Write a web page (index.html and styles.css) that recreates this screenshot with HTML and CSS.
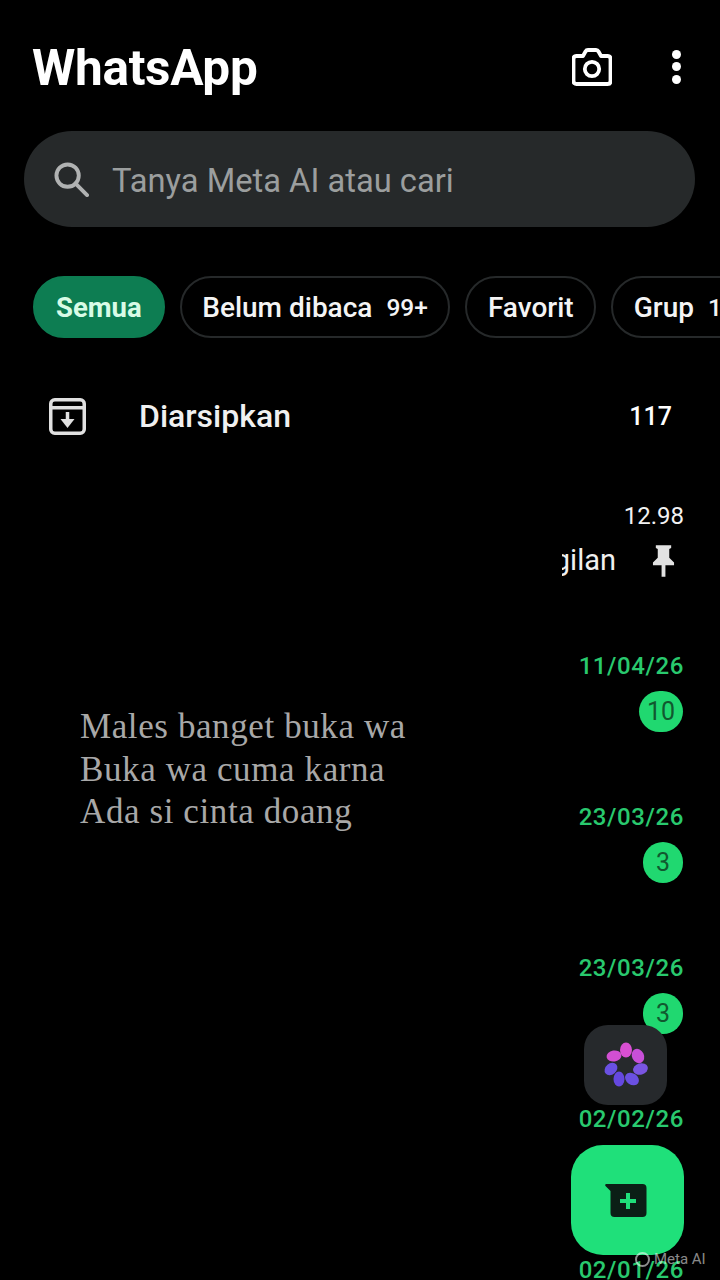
FILE: index.html
```html
<!DOCTYPE html>
<html lang="id">
<head>
  <meta charset="UTF-8" />
  <meta name="viewport" content="width=device-width, initial-scale=1.0" />
  <title>WhatsApp</title>
  <link rel="stylesheet" href="styles.css">
</head>
<body>
  <div class="app">
    <header class="top-bar">
      <h1>WhatsApp</h1>
      <div class="top-actions">
        <svg class="icon-camera" viewBox="0 0 40 38" fill="none" stroke="#fff" stroke-width="3.800">
          <path d="M4.500 8h6.500l2.500-4.500q.8-1.500 2.500-1.500h8q1.700 0 2.500 1.500l2.500 4.500h6.500q3 0 3 3v22q0 3-3 3h-31q-3 0-3-3v-22q0-3 3-3z" stroke-linejoin="round" />
          <circle cx="20" cy="21" r="7.200" />
        </svg>
        <div class="dots"><span></span><span></span><span></span></div>
      </div>
    </header>

    <div class="search">
      <svg class="icon-search" viewBox="0 0 36 36" fill="none" stroke="#b0b2b2" stroke-width="4">
        <circle cx="14" cy="14" r="11.500" />
        <path d="M22 22l12 12" stroke-linecap="round" />
      </svg>
      <span>Tanya Meta AI atau cari</span>
    </div>

    <div class="chips">
      <div class="chip active">Semua</div>
      <div class="chip">Belum dibaca <small>99+</small></div>
      <div class="chip">Favorit</div>
      <div class="chip">Grup <small>12</small></div>
    </div>

    <div class="archived">
      <svg class="icon-archive" viewBox="0 0 37 37" fill="none" stroke="#e0e0e0" stroke-width="3.500">
        <rect x="1.750" y="1.750" width="33.500" height="33.500" rx="4" />
        <path d="M2 9.700h33" />
        <path d="M18.500 14v10" />
        <path d="M11.500 21h14l-7 9z" fill="#e0e0e0" stroke="none" />
      </svg>
      <span class="archived-label">Diarsipkan</span>
      <span class="archived-count">117</span>
    </div>

    <div class="chat">
      <div class="chat-body"></div>
      <div class="chat-meta">
        <div class="chat-time white">12.98</div>
        <div class="pinned">
          <div class="preview"><span>Panggilan</span></div>
          <svg class="icon-pin" viewBox="0 0 24 34" fill="#e2e2e2">
            <path d="M4 1h16v3l-2 1v9l5 5v3h-9v12h-4v-12h-9v-3l5-5v-9l-2-1z" />
          </svg>
        </div>
      </div>
    </div>

    <div class="chat">
      <div class="chat-body">
        <p class="quote">Males banget buka wa<br>Buka wa cuma karna<br>Ada si cinta doang</p>
      </div>
      <div class="chat-meta">
        <div class="chat-time">11/04/26</div>
        <div class="badge wide">10</div>
      </div>
    </div>

    <div class="chat">
      <div class="chat-body"></div>
      <div class="chat-meta">
        <div class="chat-time">23/03/26</div>
        <div class="badge">3</div>
      </div>
    </div>

    <div class="chat">
      <div class="chat-body"></div>
      <div class="chat-meta">
        <div class="chat-time">23/03/26</div>
        <div class="badge">3</div>
      </div>
    </div>

    <div class="chat">
      <div class="chat-body"></div>
      <div class="chat-meta">
        <div class="chat-time">02/02/26</div>
      </div>
    </div>

    <div class="chat">
      <div class="chat-body"></div>
      <div class="chat-meta">
        <div class="chat-time">02/01/26</div>
      </div>
    </div>

    <div class="fab-meta">
      <svg class="icon-flower" viewBox="0 0 50 50">
        <ellipse cx="25" cy="10" rx="6" ry="7.500" fill="#d94fd2" />
        <ellipse cx="37" cy="16" rx="6" ry="7.500" fill="#c84fd8" transform="rotate(-25 37 16)" />
        <ellipse cx="39.500" cy="29" rx="7.500" ry="5.700" fill="#7a55e2" transform="rotate(-15 39.500 29)" />
        <ellipse cx="31" cy="39" rx="7.500" ry="5.700" fill="#6a50e2" transform="rotate(35 31 39)" />
        <ellipse cx="18" cy="39" rx="5.500" ry="7.500" fill="#6548e0" />
        <ellipse cx="10" cy="29" rx="5.500" ry="7" fill="#6a50e2" transform="rotate(50 10 29)" />
        <ellipse cx="13" cy="16" rx="7.500" ry="5.500" fill="#d14fd2" transform="rotate(-10 13 16)" />
      </svg>
    </div>

    <div class="fab-new">
      <svg class="icon-new" viewBox="0 0 42 33">
        <path d="M1.500 0h36q4 0 4 4v25q0 4-4 4h-28q-4 0-4-4v-22l-5-5q-1-2 1-2z" fill="#0b1f16" />
        <path d="M23 9v16M15 17h16" stroke="#1fe07a" stroke-width="4" />
      </svg>
    </div>

    <div class="watermark"><i></i>Meta AI</div>
  </div>
</body>
</html>
```

FILE: styles.css
```css
html, body {
  margin: 0;
  background: #000;
}
.app {
  position: relative;
  height: 1280px;
  overflow: hidden;
  font-family: Roboto, "Liberation Sans", sans-serif;
  color: #fff;
}
.top-bar {
  display: flex;
  justify-content: space-between;
  align-items: center;
  height: 131px;
  padding: 0 39px 0 32px;
  box-sizing: border-box;
}
.top-bar h1 {
  margin: 5px 0 0;
  font-size: 49.500px;
  font-weight: 700;
  letter-spacing: -0.3px;
}
.top-actions {
  display: flex;
  align-items: center;
  gap: 60px;
  margin-top: 2px;
}
.icon-camera {
  width: 40px;
  height: 38px;
}
.dots {
  display: flex;
  flex-direction: column;
  gap: 3.500px;
}
.dots span {
  width: 9px;
  height: 9px;
  border-radius: 50%;
  background: #fff;
}
.search {
  display: flex;
  align-items: center;
  gap: 23px;
  height: 96px;
  margin: 0 25px 0 24px;
  padding-left: 30px;
  border-radius: 48px;
  background: #26292a;
  color: #9b9e9e;
  font-size: 32.700px;
}
.search span {
  padding-top: 3px;
}
.icon-search {
  width: 35px;
  height: 35px;
}
.chips {
  display: flex;
  gap: 15px;
  margin: 49px 0 0 33px;
  white-space: nowrap;
}
.chip {
  display: flex;
  align-items: center;
  flex-shrink: 0;
  height: 62px;
  padding: 0 20.500px;
  box-sizing: border-box;
  border: 2px solid #26292a;
  border-radius: 31px;
  font-size: 28px;
  font-weight: 500;
  color: #f4f4f4;
}
.chip small {
  margin-left: 14px;
  font-size: 24.500px;
}
.chip.active {
  padding: 0 21px;
  border-color: #0d7d52;
  background: #0d7d52;
  font-size: 27.500px;
  font-weight: 700;
  color: #d8fbe6;
}
.archived {
  display: flex;
  align-items: center;
  height: 148px;
  padding: 4px 48px 0 49px;
}
.icon-archive {
  width: 37px;
  height: 37px;
}
.archived-label {
  flex: 1;
  margin-left: 53px;
  font-size: 32px;
  font-weight: 500;
  color: #f0f0f0;
}
.archived-count {
  font-size: 25px;
  font-weight: 500;
}
.chat {
  display: flex;
  justify-content: space-between;
  height: 151px;
  padding-right: 36px;
}
.chat-body {
  flex: 1;
  padding-left: 80px;
}
.quote {
  margin: 65px 0 0;
  font-family: "Liberation Serif", serif;
  font-size: 35px;
  line-height: 42.500px;
  letter-spacing: 0.6px;
  color: #a8a8a8;
}
.chat-meta {
  display: flex;
  flex-direction: column;
  align-items: flex-end;
}
.chat-time {
  margin-top: 11px;
  font-size: 24px;
  line-height: 28px;
  font-weight: 500;
  letter-spacing: 0.6px;
  color: #29c96e;
}
.chat-time.white {
  margin-top: 12px;
  font-weight: 400;
  letter-spacing: 0;
  color: #f2f2f2;
}
.pinned {
  display: flex;
  align-items: center;
  gap: 36px;
  margin-top: 13px;
}
.preview {
  display: flex;
  justify-content: flex-end;
  width: 54px;
  overflow: hidden;
  font-size: 29px;
  color: #f0f0f0;
}
.icon-pin {
  width: 23px;
  height: 33px;
  margin-right: 9px;
}
.badge {
  display: flex;
  align-items: center;
  justify-content: center;
  width: 40px;
  height: 41px;
  margin: 11px 1px 0 0;
  border-radius: 21px;
  background: #20d870;
  color: #11582f;
  font-size: 25px;
}
.badge.wide {
  width: 44px;
}
.fab-meta {
  position: absolute;
  left: 584px;
  top: 1025px;
  display: flex;
  align-items: center;
  justify-content: center;
  width: 83px;
  height: 80px;
  border-radius: 24px;
  background: #26292c;
}
.icon-flower {
  width: 50px;
  height: 50px;
}
.fab-new {
  position: absolute;
  left: 571px;
  top: 1145px;
  display: flex;
  align-items: center;
  justify-content: center;
  width: 113px;
  height: 110px;
  border-radius: 32px;
  background: #1fe07a;
}
.icon-new {
  width: 42px;
  height: 33px;
  margin-right: 3px;
}
.watermark {
  position: absolute;
  left: 635px;
  top: 1250px;
  display: flex;
  align-items: center;
  gap: 4px;
  font-size: 15px;
  line-height: 18px;
  color: rgba(255, 255, 255, 0.55);
}
.watermark i {
  width: 11px;
  height: 11px;
  border: 2px solid rgba(255, 255, 255, 0.55);
  border-radius: 50%;
}
```
